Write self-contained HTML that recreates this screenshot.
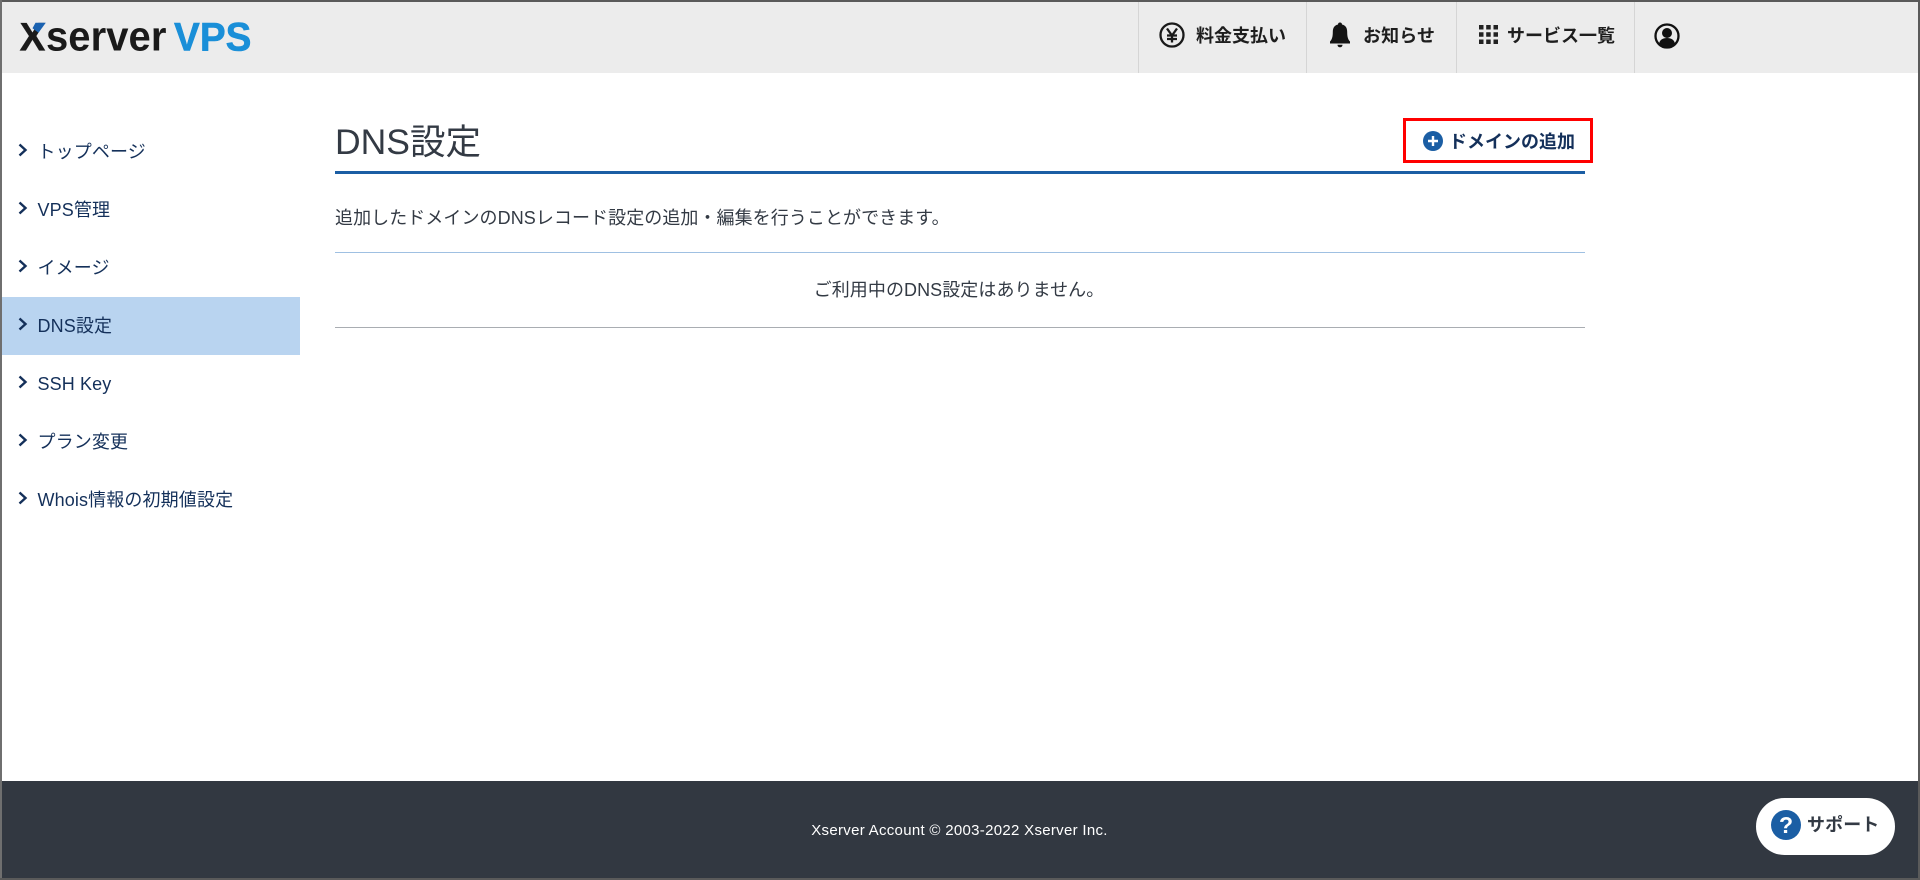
<!DOCTYPE html>
<html lang="ja"><head><meta charset="utf-8"><title>DNS設定</title>
<style>
*{box-sizing:border-box}
html,body{margin:0;padding:0;width:1920px;height:880px;overflow:hidden;background:#fff}
body{position:relative;font-family:"Liberation Sans","Noto Sans CJK JP",sans-serif;color:#333a44;font-size:18px;letter-spacing:.07px}
.a{position:absolute;white-space:nowrap}
.hdr{left:0;top:0;width:1920px;height:73px;background:#ececec}
.sep{top:0;width:1px;height:73px;background:#d5d5d5}
.nav{top:23px;height:26px;line-height:26px;font-weight:700;color:#1e1e1e;letter-spacing:0}
.mi{left:37.500px;height:58px;line-height:58px;color:#14305a;letter-spacing:.13px}
.chev{left:17px;width:12px;height:16px}
</style></head><body>
<div class="a hdr"></div>
<svg class="a" style="left:0;top:0" width="270" height="73" viewBox="0 0 270 73">
<text x="19.500" y="50.700" font-family="Liberation Sans" font-weight="700" font-size="40" fill="#1a1a1a" stroke="#1a1a1a" stroke-width=".3" textLength="26" lengthAdjust="spacingAndGlyphs">X</text>
<path d="M35.500 22.700h10.300l-7.300 10-6-4.500z" fill="#1b62b0"/>
<text x="46" y="50.700" font-family="Liberation Sans" font-weight="700" font-size="42" fill="#1a1a1a" textLength="120.500" lengthAdjust="spacingAndGlyphs">server</text>
<text x="174" y="50.700" font-family="Liberation Sans" font-weight="700" font-size="39.500" fill="#1a8fd8" stroke="#1a8fd8" stroke-width=".6" textLength="77.500" lengthAdjust="spacingAndGlyphs">VPS</text>
</svg>
<div class="a sep" style="left:1138px"></div>
<div class="a sep" style="left:1306px"></div>
<div class="a sep" style="left:1456px"></div>
<div class="a sep" style="left:1634px"></div>
<svg class="a" style="left:1159px;top:22px" width="26" height="26" viewBox="0 0 26 26" fill="none" stroke="#1a1a1a"><circle cx="13" cy="13" r="11.500" stroke-width="2.300"/><path d="M8 6.500l5 7 5-7M13 13.500v7M8 13.500h10M8 17h10" stroke-width="2.300"/></svg>
<div class="a nav" style="left:1196px">料金支払い</div>
<svg class="a" style="left:1329px;top:22px" width="22" height="26" viewBox="0 0 22 26" fill="#141414"><path d="M11 .5c1.200 0 2 .8 2 2 3.800.8 5.200 3.700 5.200 7.500 0 4.800 .8 7.500 2.800 9.500v2H1v-2c2-2 2.800-4.700 2.800-9.500 0-3.800 1.400-6.700 5.200-7.500 0-1.200.8-2 2-2z"/><path d="M8.500 22.700h5c0 1.500-1 2.500-2.500 2.500s-2.500-1-2.500-2.500z"/></svg>
<div class="a nav" style="left:1363px;letter-spacing:.1px">お知らせ</div>
<svg class="a" style="left:1479px;top:25px" width="19" height="19" viewBox="0 0 19 19" fill="#222"><path d="M0 0h4.500v4.500H0zM7.200 0h4.500v4.500H7.200zM14.500 0H19v4.500h-4.500zM0 7.200h4.500v4.500H0zM7.200 7.200h4.500v4.500H7.200zM14.500 7.200H19v4.500h-4.500zM0 14.500h4.500V19H0zM7.200 14.500h4.500V19H7.200zM14.500 14.500H19V19h-4.500z"/></svg>
<div class="a nav" style="left:1507px">サービス一覧</div>
<svg class="a" style="left:1654px;top:23px" width="26" height="26" viewBox="0 0 26 26"><circle cx="13" cy="13" r="11.500" fill="none" stroke="#111" stroke-width="2.300"/><circle cx="13" cy="10" r="5" fill="#111"/><path d="M5 21c.5-4 3.500-6 8-6s7.500 2 8 6c-2 2-5 3.500-8 3.500S7 23 5 21z" fill="#111"/></svg>

<div class="a" style="left:2px;top:297px;width:298px;height:58px;background:#b9d4f0"></div>
<svg class="a chev" style="top:142px" viewBox="0 0 12 16" fill="none" stroke="#14305a" stroke-width="2.400"><path d="M2.500 2.500L8.500 8l-6 5.500"/></svg>
<div class="a mi" style="top:123px">トップページ</div>
<svg class="a chev" style="top:200px" viewBox="0 0 12 16" fill="none" stroke="#14305a" stroke-width="2.400"><path d="M2.500 2.500L8.500 8l-6 5.500"/></svg>
<div class="a mi" style="top:181px">VPS管理</div>
<svg class="a chev" style="top:258px" viewBox="0 0 12 16" fill="none" stroke="#14305a" stroke-width="2.400"><path d="M2.500 2.500L8.500 8l-6 5.500"/></svg>
<div class="a mi" style="top:239px">イメージ</div>
<svg class="a chev" style="top:316px" viewBox="0 0 12 16" fill="none" stroke="#14305a" stroke-width="2.400"><path d="M2.500 2.500L8.500 8l-6 5.500"/></svg>
<div class="a mi" style="top:297px">DNS設定</div>
<svg class="a chev" style="top:374px" viewBox="0 0 12 16" fill="none" stroke="#14305a" stroke-width="2.400"><path d="M2.500 2.500L8.500 8l-6 5.500"/></svg>
<div class="a mi" style="top:355px">SSH Key</div>
<svg class="a chev" style="top:432px" viewBox="0 0 12 16" fill="none" stroke="#14305a" stroke-width="2.400"><path d="M2.500 2.500L8.500 8l-6 5.500"/></svg>
<div class="a mi" style="top:413px">プラン変更</div>
<svg class="a chev" style="top:490px" viewBox="0 0 12 16" fill="none" stroke="#14305a" stroke-width="2.400"><path d="M2.500 2.500L8.500 8l-6 5.500"/></svg>
<div class="a mi" style="top:471px">Whois情報の初期値設定</div>

<div class="a" style="left:335px;top:116px;font-size:35.500px;line-height:52px;color:#333a44;letter-spacing:0">DNS設定</div>
<div class="a" style="left:335px;top:171px;width:1250px;height:3px;background:#1b5ea4"></div>
<div class="a" style="left:1403px;top:118px;width:190px;height:45px;border:3px solid #f00;background:#fff"></div>
<svg class="a" style="left:1423px;top:131px" width="20" height="20" viewBox="0 0 20 20"><circle cx="10" cy="10" r="10" fill="#1b5ea4"/><path d="M10 5v10M5 10h10" stroke="#fff" stroke-width="2.400"/></svg>
<div class="a" style="left:1449px;top:129px;line-height:26px;font-weight:700;color:#14305a;letter-spacing:0">ドメインの追加</div>
<div class="a" style="left:335px;top:205px;line-height:26px">追加したドメインのDNSレコード設定の追加・編集を行うことができます。</div>
<div class="a" style="left:335px;top:252px;width:1250px;height:1px;background:#9fc0e2"></div>
<div class="a" style="left:335px;top:277px;width:1248px;text-align:center;line-height:26px">ご利用中のDNS設定はありません。</div>
<div class="a" style="left:335px;top:327px;width:1250px;height:1px;background:#a9adb2"></div>

<div class="a" style="left:0;top:781px;width:1920px;height:99px;background:#323841"></div>
<div class="a" style="left:0;top:821px;width:1919px;text-align:center;line-height:20px;font-size:15px;color:#fff;letter-spacing:.3px">Xserver Account © 2003-2022 Xserver Inc.</div>
<div class="a" style="left:1756px;top:798px;width:139px;height:57px;border-radius:29px;background:#fff"></div>
<svg class="a" style="left:1771px;top:810px" width="30" height="30" viewBox="0 0 30 30"><circle cx="15" cy="15" r="15" fill="#1b5ea4"/><text x="15" y="23" text-anchor="middle" font-family="Liberation Sans" font-weight="700" font-size="23" fill="#fff">?</text></svg>
<div class="a" style="left:1807px;top:812px;line-height:26px;font-weight:700;color:#333a44;letter-spacing:.1px">サポート</div>
<div class="a" style="left:0;top:0;width:1920px;height:2px;background:#5a5a5a"></div>
<div class="a" style="left:0;top:0;width:1.500px;height:880px;background:#6f6f6f"></div>
<div class="a" style="left:1918px;top:0;width:2px;height:880px;background:#5a5a5a"></div>
<div class="a" style="left:0;top:878px;width:1920px;height:2px;background:#5a5a5a"></div>
</body></html>
